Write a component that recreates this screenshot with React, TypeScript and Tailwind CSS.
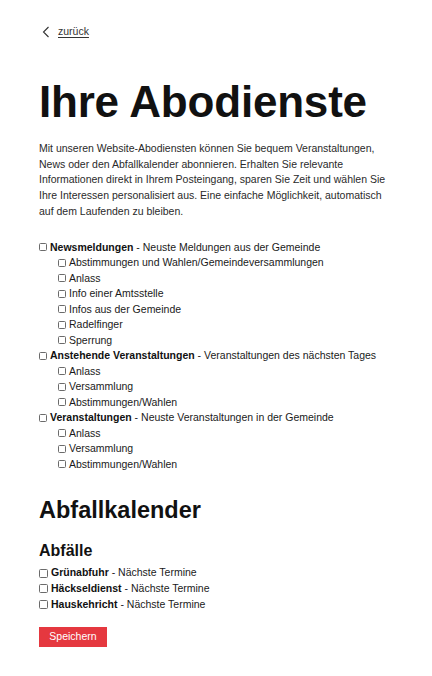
const NEWS = [
  'Abstimmungen und Wahlen/Gemeindeversammlungen',
  'Anlass',
  'Info einer Amtsstelle',
  'Infos aus der Gemeinde',
  'Radelfinger',
  'Sperrung',
];

const EVENTS = ['Anlass', 'Versammlung', 'Abstimmungen/Wahlen'];

const GROUPS = [
  { title: 'Newsmeldungen', desc: 'Neuste Meldungen aus der Gemeinde', items: NEWS },
  { title: 'Anstehende Veranstaltungen', desc: 'Veranstaltungen des nächsten Tages', items: EVENTS },
  { title: 'Veranstaltungen', desc: 'Neuste Veranstaltungen in der Gemeinde', items: EVENTS },
];

const WASTE = ['Grünabfuhr', 'Häckseldienst', 'Hauskehricht'];

function Box({ size = 'sm' }: { size?: 'sm' | 'md' }) {
  const dims = size === 'sm' ? 'w-[8px] h-[8px]' : 'w-[9px] h-[9px]';
  return <span className={`${dims} shrink-0 rounded-[1.5px] border border-[#6b6b6b] bg-white`} />;
}

export default function App() {
  return (
    <div className="min-h-[676px] bg-white px-[39px] text-[#1a1a1a] [font-family:'Liberation_Sans',Arial,sans-serif]">
      <a className="flex items-center gap-[8px] pt-[24px] text-[10.5px] text-[#333]">
        <svg width="8" height="12" viewBox="0 0 8 12" fill="none" className="ml-[3px]">
          <path d="M6.5 1L1.5 6l5 5" stroke="#333" strokeWidth="1.1" />
        </svg>
        <span className="underline underline-offset-2">zurück</span>
      </a>

      <h1 className="mt-[37px] text-[44px] font-bold leading-[50px] tracking-[-0.2px] text-[#111]">
        Ihre Abodienste
      </h1>

      <p className="mt-[14px] text-[10.5px] leading-[15.8px] text-[#2a2a2a]">
        Mit unseren Website-Abodiensten können Sie bequem Veranstaltungen, News oder den Abfallkalender
        abonnieren. Erhalten Sie relevante Informationen direkt in Ihrem Posteingang, sparen Sie Zeit und
        wählen Sie Ihre Interessen personalisiert aus. Eine einfache Möglichkeit, automatisch auf dem
        Laufenden zu bleiben.
      </p>

      <ul className="mt-[20px] text-[10.5px] leading-[15.5px]">
        {GROUPS.map(g => (
          <li key={g.title}>
            <div className="flex items-center gap-[3px]">
              <Box />
              <span>
                <b className="font-bold text-[#111]">{g.title}</b> - {g.desc}
              </span>
            </div>
            <ul className="pl-[19px]">
              {g.items.map(item => (
                <li key={item} className="flex items-center gap-[3px]">
                  <Box />
                  <span>{item}</span>
                </li>
              ))}
            </ul>
          </li>
        ))}
      </ul>

      <h2 className="mt-[23px] text-[23.5px] font-bold leading-[30px] text-[#111]">Abfallkalender</h2>
      <h3 className="mt-[15px] text-[16px] font-bold leading-[22px] text-[#111]">Abfälle</h3>

      <ul className="mt-[3px] text-[10.5px] leading-[15.8px]">
        {WASTE.map(w => (
          <li key={w} className="flex items-center gap-[3px]">
            <Box size="md" />
            <span>
              <b className="font-bold text-[#111]">{w}</b> - Nächste Termine
            </span>
          </li>
        ))}
      </ul>

      <button className="mt-[14px] h-[20px] w-[68px] bg-[#e5383f] text-[10.5px] text-white">Speichern</button>
    </div>
  );
}
